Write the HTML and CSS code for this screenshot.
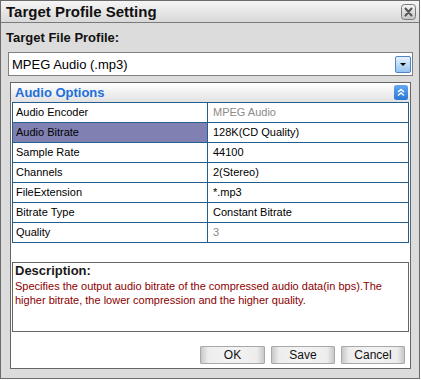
FILE: index.html
```html
<!DOCTYPE html>
<html>
<head>
<meta charset="utf-8">
<link rel="stylesheet" href="styles.css">
</head>
<body>
<div class="window">
  <div class="titlebar">
    <span class="title">Target Profile Setting</span>
    <span class="close">
      <svg width="15" height="16" viewBox="0 0 15 16">
        <defs><linearGradient id="cg" x1="0" y1="0" x2="0" y2="1"><stop offset="0" stop-color="#f6f6f6"/><stop offset="1" stop-color="#c4c4c4"/></linearGradient></defs>
        <rect x="0.5" y="0.5" width="14" height="15" rx="3" fill="url(#cg)" stroke="#7a7a7a"/>
        <path d="M4.5 4.5 L10.5 11.5 M10.5 4.5 L4.5 11.5" stroke="#555" stroke-width="2" stroke-linecap="round"/>
      </svg>
    </span>
  </div>
  <div class="content">
    <div class="label">Target File Profile:</div>
    <div class="select">
      <span class="select-text">MPEG Audio (.mp3)</span>
      <span class="arrow">
        <svg width="16" height="17" viewBox="0 0 16 17">
          <defs><linearGradient id="ag" x1="0" y1="0" x2="0" y2="1"><stop offset="0" stop-color="#eaf4fe"/><stop offset="1" stop-color="#93c3ef"/></linearGradient></defs>
          <rect x="0.5" y="0.5" width="15" height="16" rx="1.5" fill="url(#ag)" stroke="#4f86c6"/>
          <path d="M5 7 L11 7 L8 10 Z" fill="#000"/>
        </svg>
      </span>
    </div>
    <div class="panel">
      <div class="panel-head">
        <span class="panel-title">Audio Options</span>
        <span class="collapse">
          <svg width="14" height="15" viewBox="0 0 14 15">
            <defs><linearGradient id="bg" x1="0" y1="0" x2="0" y2="1"><stop offset="0" stop-color="#63a8f2"/><stop offset="1" stop-color="#2a77d8"/></linearGradient></defs>
            <rect x="0" y="0" width="14" height="15" rx="2.5" fill="url(#bg)"/>
            <path d="M4 7 L7 4.5 L10 7 M4 10.5 L7 8 L10 10.5" stroke="#fff" stroke-width="1.5" fill="none"/>
          </svg>
        </span>
      </div>
      <table class="props">
        <tr><td class="k">Audio Encoder</td><td class="v dim">MPEG Audio</td></tr>
        <tr><td class="k sel">Audio Bitrate</td><td class="v">128K(CD Quality)</td></tr>
        <tr><td class="k">Sample Rate</td><td class="v">44100</td></tr>
        <tr><td class="k">Channels</td><td class="v">2(Stereo)</td></tr>
        <tr><td class="k">FileExtension</td><td class="v">*.mp3</td></tr>
        <tr><td class="k">Bitrate Type</td><td class="v">Constant Bitrate</td></tr>
        <tr><td class="k">Quality</td><td class="v dim">3</td></tr>
      </table>
      <div class="spacer"></div>
      <div class="desc">
        <div class="desc-title">Description:</div>
        <div class="desc-text">Specifies the output audio bitrate of the compressed audio data(in bps).The<br>higher bitrate, the lower compression and the higher quality.</div>
      </div>
      <div class="buttons">
        <button class="btn ok">OK</button>
        <button class="btn">Save</button>
        <button class="btn">Cancel</button>
      </div>
    </div>
  </div>
</div>
</body>
</html>
```
FILE: styles.css
```css
html, body {
  margin: 0;
  padding: 0;
  background: #ffffff;
}
.window {
  width: 420px;
  height: 379px;
  box-sizing: border-box;
  border: 1px solid #6b6b6b;
  background: #dcdcdc;
  display: flex;
  flex-direction: column;
  font-family: "Liberation Sans", Arial, sans-serif;
}
.titlebar {
  height: 21px;
  border-bottom: 1px solid #7a7a7a;
  background: linear-gradient(#f5f5f5, #d9d9d9);
  display: flex;
  align-items: center;
  justify-content: space-between;
  flex-shrink: 0;
}
.title {
  padding-left: 5px;
  font-size: 15px;
  font-weight: bold;
  color: #111;
  line-height: 21px;
}
.close {
  margin-right: 3px;
  display: flex;
}
.content {
  display: flex;
  flex-direction: column;
  flex: 1;
}
.label {
  padding: 7px 0 0 5px;
  font-size: 13px;
  font-weight: bold;
  line-height: 16px;
  color: #111;
}
.select {
  margin: 6px 0 0 7px;
  width: 405px;
  height: 24px;
  box-sizing: border-box;
  border: 1px solid #7f7f7f;
  background: #fff;
  display: flex;
  align-items: center;
  justify-content: space-between;
}
.select-text {
  padding-left: 3px;
  font-size: 13px;
  color: #000;
}
.arrow {
  margin-right: 1px;
  display: flex;
}
.panel {
  margin: 6px 0 0 9px;
  width: 401px;
  height: 287px;
  box-sizing: border-box;
  border: 1px solid #666;
  background: #fff;
  display: flex;
  flex-direction: column;
}
.panel-head {
  height: 19px;
  background: linear-gradient(#ffffff, #e2e2e2);
  display: flex;
  align-items: center;
  justify-content: space-between;
}
.panel-title {
  padding-left: 4px;
  font-size: 13px;
  font-weight: bold;
  color: #1e6fd9;
}
.collapse {
  margin-right: 2px;
  display: flex;
}
.props {
  margin: 0 1px;
  width: 397px;
  border-collapse: collapse;
  border: 1px solid #235e8e;
  font-size: 11px;
  color: #000;
}
.props td {
  border: 1px solid #235e8e;
  height: 19px;
  padding: 0;
  line-height: 19px;
  white-space: nowrap;
}
.props td.k {
  width: 191px;
  padding-left: 3px;
}
.props td.v {
  padding-left: 5px;
}
.props td.sel {
  background: #8080b2;
}
.props td.dim {
  color: #8a8a8a;
}
.spacer {
  height: 19px;
}
.desc {
  margin: 0 1px;
  height: 70px;
  box-sizing: border-box;
  border: 1px solid #666;
  padding-left: 2px;
}
.desc-title {
  font-size: 13px;
  font-weight: bold;
  line-height: 16px;
  color: #1a1a1a;
}
.desc-text {
  font-size: 11px;
  line-height: 14px;
  color: #8b0000;
}
.buttons {
  flex: 1;
  display: flex;
  justify-content: flex-end;
  align-items: flex-end;
  gap: 6px;
  padding: 0 5px 4px 0;
}
.btn {
  width: 64px;
  height: 18px;
  box-sizing: border-box;
  margin: 0;
  padding: 0;
  border: 1px solid #a8a8a8;
  border-radius: 1px;
  background: linear-gradient(to right, #c8c8c8 0, #ededed 7px, #f3f3f3 50%, #ededed calc(100% - 7px), #c8c8c8 100%);
  font-family: "Liberation Sans", Arial, sans-serif;
  font-size: 12px;
  color: #111;
  line-height: 16px;
}
.btn.ok {
  width: 65px;
}
```
